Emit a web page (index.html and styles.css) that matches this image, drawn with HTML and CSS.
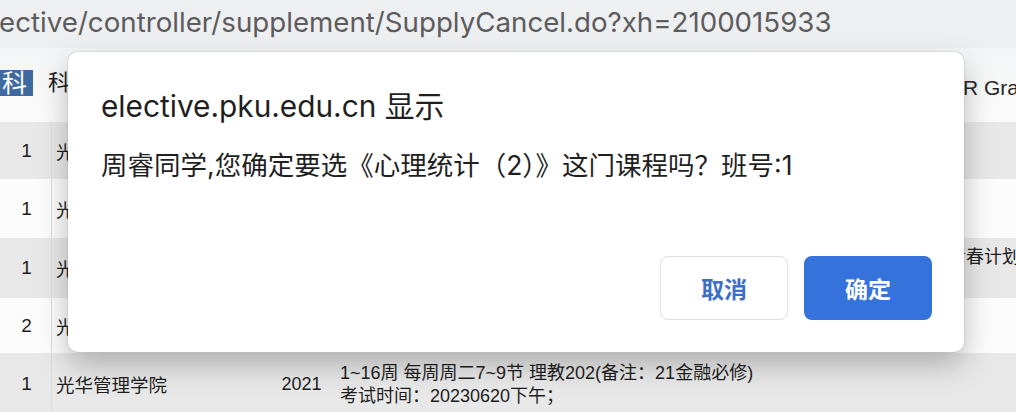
FILE: index.html
```html
<!DOCTYPE html>
<html lang="zh-CN">
<head>
<meta charset="utf-8">
<title>SupplyCancel</title>
<link rel="stylesheet" href="styles.css">
</head>
<body>
<div class="page">
  <div class="urlbar"><span class="url">ective/controller/supplement/SupplyCancel.do?xh=2100015933</span></div>
  <div class="header">
    <div class="header-left">
      <span class="tab tab-active">科</span>
      <span class="tab">科目</span>
    </div>
    <span class="header-right">R Grade</span>
  </div>
  <div class="table">
    <div class="row row-gray row-a">
      <div class="cell c1">1</div>
      <div class="cell c2">光华管理学院</div>
      <div class="cell c3">2021</div>
      <div class="cell c4">1~16周 每周周一3~4节 二教101</div>
      <div class="cell c5"></div>
    </div>
    <div class="row row-white row-b">
      <div class="cell c1">1</div>
      <div class="cell c2">光华管理学院</div>
      <div class="cell c3">2021</div>
      <div class="cell c4">1~16周 每周周三5~6节 二教201</div>
      <div class="cell c5"></div>
    </div>
    <div class="row row-gray row-c">
      <div class="cell c1">1</div>
      <div class="cell c2">光华管理学院</div>
      <div class="cell c3">2021</div>
      <div class="cell c4">1~16周 每周周四3~4节 理教301</div>
      <div class="cell c5 c5-top">青春计划</div>
    </div>
    <div class="row row-white row-d">
      <div class="cell c1">2</div>
      <div class="cell c2">光华管理学院</div>
      <div class="cell c3">2021</div>
      <div class="cell c4">1~16周 每周周五1~2节 理教107</div>
      <div class="cell c5"></div>
    </div>
    <div class="row row-gray row-e">
      <div class="cell c1">1</div>
      <div class="cell c2">光华管理学院</div>
      <div class="cell c3">2021</div>
      <div class="cell c4 c4-multi">
        <span>1~16周 每周周二7~9节 理教202(备注：21金融必修)</span>
        <span>考试时间：20230620下午；</span>
      </div>
      <div class="cell c5"></div>
    </div>
  </div>

  <div class="dialog">
    <div class="dialog-title">elective.pku.edu.cn 显示</div>
    <div class="dialog-message">周睿同学,您确定要选《心理统计（2）》这门课程吗？班号:1</div>
    <div class="dialog-actions">
      <button class="btn btn-cancel">取消</button>
      <button class="btn btn-ok">确定</button>
    </div>
  </div>
</div>
</body>
</html>
```

FILE: styles.css
```css
html, body {
  margin: 0;
  padding: 0;
  background: #fcfcfc;
}

.page {
  position: relative;
  width: 1016px;
  height: 412px;
  overflow: hidden;
  font-family: "Liberation Sans", "Noto Sans CJK SC", sans-serif;
  color: #1e1e1e;
}

.urlbar {
  height: 48px;
  background: #eeeff1;
  display: flex;
  align-items: center;
  white-space: nowrap;
}

.url {
  font-family: "Inter", "Noto Sans CJK SC", sans-serif;
  font-size: 27.7px;
  color: #5c5c5e;
  margin-left: -1px;
  padding-bottom: 4px;
}

.header {
  height: 74px;
  background: linear-gradient(#f4f5f6, #fbfbfb);
  display: flex;
  align-items: center;
  white-space: nowrap;
}

.header-left {
  width: 963px;
  flex: none;
  display: flex;
  align-items: center;
  gap: 15px;
  padding-bottom: 4px;
}

.tab {
  font-size: 22px;
  line-height: 26px;
}

.tab-active {
  background: #3e6aa0;
  color: #ffffff;
  font-size: 25px;
  padding: 0 6px 0 5px;
  margin-left: -3px;
}

.header-right {
  font-size: 21px;
  color: #262626;
  padding-top: 6px;
}

.table {
  display: flex;
  flex-direction: column;
}

.row {
  display: grid;
  grid-template-columns: 52px 213px 67px 616px 1fr;
  font-size: 18px;
  white-space: nowrap;
}

.row-a { height: 57px; }
.row-b { height: 59px; }
.row-c { height: 60px; }
.row-d { height: 55px; }
.row-e { height: 62px; }

.row-gray { background: #e8e8e8; }
.row-white { background: #fcfcfc; }

.cell {
  display: flex;
  align-items: center;
  overflow: hidden;
}

.c1 {
  justify-content: center;
  border-right: 1px solid #dedede;
  font-size: 19px;
  padding-left: 2px;
}

.c2 {
  padding-left: 4px;
  font-size: 18.5px;
}

.c3 {
  justify-content: center;
  padding-left: 6px;
}

.c4 {
  padding-left: 8px;
}

.c4-multi {
  flex-direction: column;
  align-items: flex-start;
  justify-content: center;
  line-height: 23px;
  padding-top: 2px;
}

.c5 {
  font-size: 18px;
}

.c5-top {
  align-items: flex-start;
  padding-top: 8px;
  line-height: 22px;
}

.dialog {
  position: absolute;
  left: 68px;
  top: 52px;
  width: 896px;
  height: 300px;
  box-sizing: border-box;
  padding: 34px 32px 32px 33px;
  background: #ffffff;
  border-radius: 10px;
  box-shadow: 0 12px 30px rgba(0, 0, 0, 0.26), 0 0 0 1px rgba(0, 0, 0, 0.06);
  display: flex;
  flex-direction: column;
  font-family: "Inter", "Noto Sans CJK SC", sans-serif;
  color: #1f1f1f;
}

.dialog-title {
  font-size: 29.8px;
  line-height: 40px;
  white-space: nowrap;
}

.dialog-message {
  margin-top: 21px;
  font-size: 26.5px;
  line-height: 36px;
  white-space: nowrap;
}

.dialog-actions {
  margin-top: auto;
  display: flex;
  justify-content: flex-end;
  gap: 16px;
}

.btn {
  width: 128px;
  height: 64px;
  border-radius: 8px;
  font-family: "Noto Sans CJK SC", sans-serif;
  font-size: 23px;
  font-weight: 700;
  cursor: pointer;
  padding: 0;
}

.btn-cancel {
  background: #ffffff;
  border: 1px solid #e1e1e1;
  color: #3c6ec8;
}

.btn-ok {
  background: #3572dc;
  border: none;
  color: #ffffff;
}
```
